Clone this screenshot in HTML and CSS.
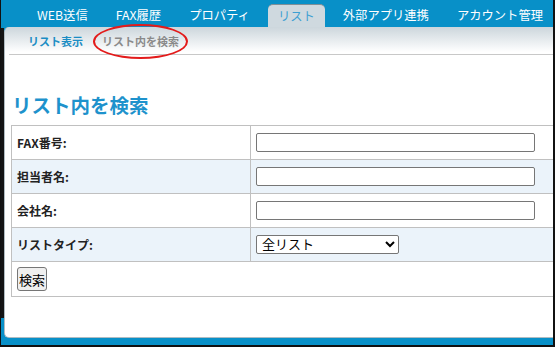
FILE: index.html
```html
<!DOCTYPE html>
<html lang="ja">
<head>
    <meta charset="UTF-8">
    <meta name="viewport" content="width=device-width, initial-scale=1.0">
    <title>リスト内を検索</title>
    <link rel="stylesheet" href="styles.css">
</head>
<body>
    <div class="frame">
        <ul class="tabs">
            <li class="tab">WEB送信</li>
            <li class="tab">FAX履歴</li>
            <li class="tab">プロパティ</li>
            <li class="tab active">リスト</li>
            <li class="tab">外部アプリ連携</li>
            <li class="tab">アカウント管理</li>
        </ul>

        <div class="panel">
            <div class="subnav">
                <a class="subnav-item">リスト表示</a>
                <a class="subnav-item current">リスト内を検索<span class="mark"></span></a>
            </div>

            <h2 class="title">リスト内を検索</h2>

            <table class="search-table">
                <tr>
                    <th>FAX番号:</th>
                    <td><input type="text" class="field"></td>
                </tr>
                <tr class="alt">
                    <th>担当者名:</th>
                    <td><input type="text" class="field"></td>
                </tr>
                <tr>
                    <th>会社名:</th>
                    <td><input type="text" class="field"></td>
                </tr>
                <tr class="alt">
                    <th>リストタイプ:</th>
                    <td>
                        <select class="list-type">
                            <option>全リスト</option>
                        </select>
                    </td>
                </tr>
                <tr class="actions">
                    <td colspan="2"><button class="search-button">検索</button></td>
                </tr>
            </table>
        </div>
    </div>
</body>
</html>
```

FILE: styles.css
```css
* {
    margin: 0;
    padding: 0;
    box-sizing: border-box;
}

body {
    font-family: "Noto Sans CJK JP", "Noto Sans", sans-serif;
    background: #111;
    overflow: hidden;
}

.frame {
    width: 555px;
    height: 347px;
    border-left: 1px solid #111;
    border-right: 2px solid #111;
    border-bottom: 2px solid #111;
    background: linear-gradient(#141414, #141414) 0 28px / 3px 290px no-repeat, #0890c8;
    display: flex;
    flex-direction: column;
    overflow: hidden;
}

.tabs {
    list-style: none;
    display: flex;
    gap: 8px;
    padding: 4px 0 0 26px;
    height: 27px;
    flex-shrink: 0;
}

.tab {
    height: 23px;
    line-height: 23px;
    padding: 0 10px;
    color: #fff;
    font-size: 12.3px;
    white-space: nowrap;
}

.tab.active {
    background: #cfd9df;
    color: #3d9fd2;
    border-radius: 5px 5px 0 0;
    border-top: 1px solid #7f8f97;
    line-height: 22px;
}

.panel {
    flex: 1;
    margin: 0 0 7px 3px;
    background: linear-gradient(#ccd6dc, #fff 25px);
    border-left: 1px solid #b0bcc2;
    border-bottom: 1px solid #b0bcc2;
    border-radius: 5px 0 0 5px;
    width: 620px;
}

.subnav {
    margin-left: 4px;
    height: 28px;
    padding: 1px 0 0 19px;
    display: flex;
    align-items: center;
    gap: 19px;
    border-bottom: 1px solid #c8c8c8;
}

.subnav-item {
    position: relative;
    font-size: 11px;
    font-weight: bold;
    line-height: 16px;
    color: #1b8dc4;
}

.subnav-item.current {
    color: #8a8a8a;
}

.mark {
    position: absolute;
    left: -9px;
    top: -9px;
    width: 95px;
    height: 35px;
    border: 2px solid #e31b1b;
    border-radius: 50%;
}

.title {
    margin: 37px 0 8px 7px;
    font-size: 19.5px;
    line-height: 25px;
    font-weight: bold;
    color: #1e92cc;
}

.search-table {
    margin-left: 6px;
    width: 600px;
    border-collapse: collapse;
}

.search-table th,
.search-table td {
    border: 1px solid #c0c0c0;
    height: 34px;
    padding: 0 5px;
    vertical-align: middle;
}

.search-table th {
    width: 239px;
    text-align: left;
    font-size: 12px;
    font-weight: bold;
    color: #222;
}

.search-table tr.alt {
    background: #ebf3fa;
}

.search-table tr.actions td {
    height: 35px;
}

.field {
    display: block;
    width: 279px;
    height: 19px;
    border: 1px solid #767676;
    border-radius: 2px;
    padding: 0 2px;
    background: #fff;
}

.list-type {
    display: block;
    width: 143px;
    height: 19px;
    padding: 0 1px;
    font-family: "Liberation Sans", "Noto Sans CJK JP", sans-serif;
    font-size: 13px;
    border: 1px solid #767676;
    border-radius: 2px;
    background: #fff;
    color: #000;
}

.search-button {
    display: block;
    width: 30px;
    height: 24px;
    font-family: "Liberation Sans", "Noto Sans CJK JP", sans-serif;
    font-size: 13px;
    padding: 0;
    border: 1px solid #767676;
    border-radius: 3px;
    background: #efefef;
    color: #000;
}
```
